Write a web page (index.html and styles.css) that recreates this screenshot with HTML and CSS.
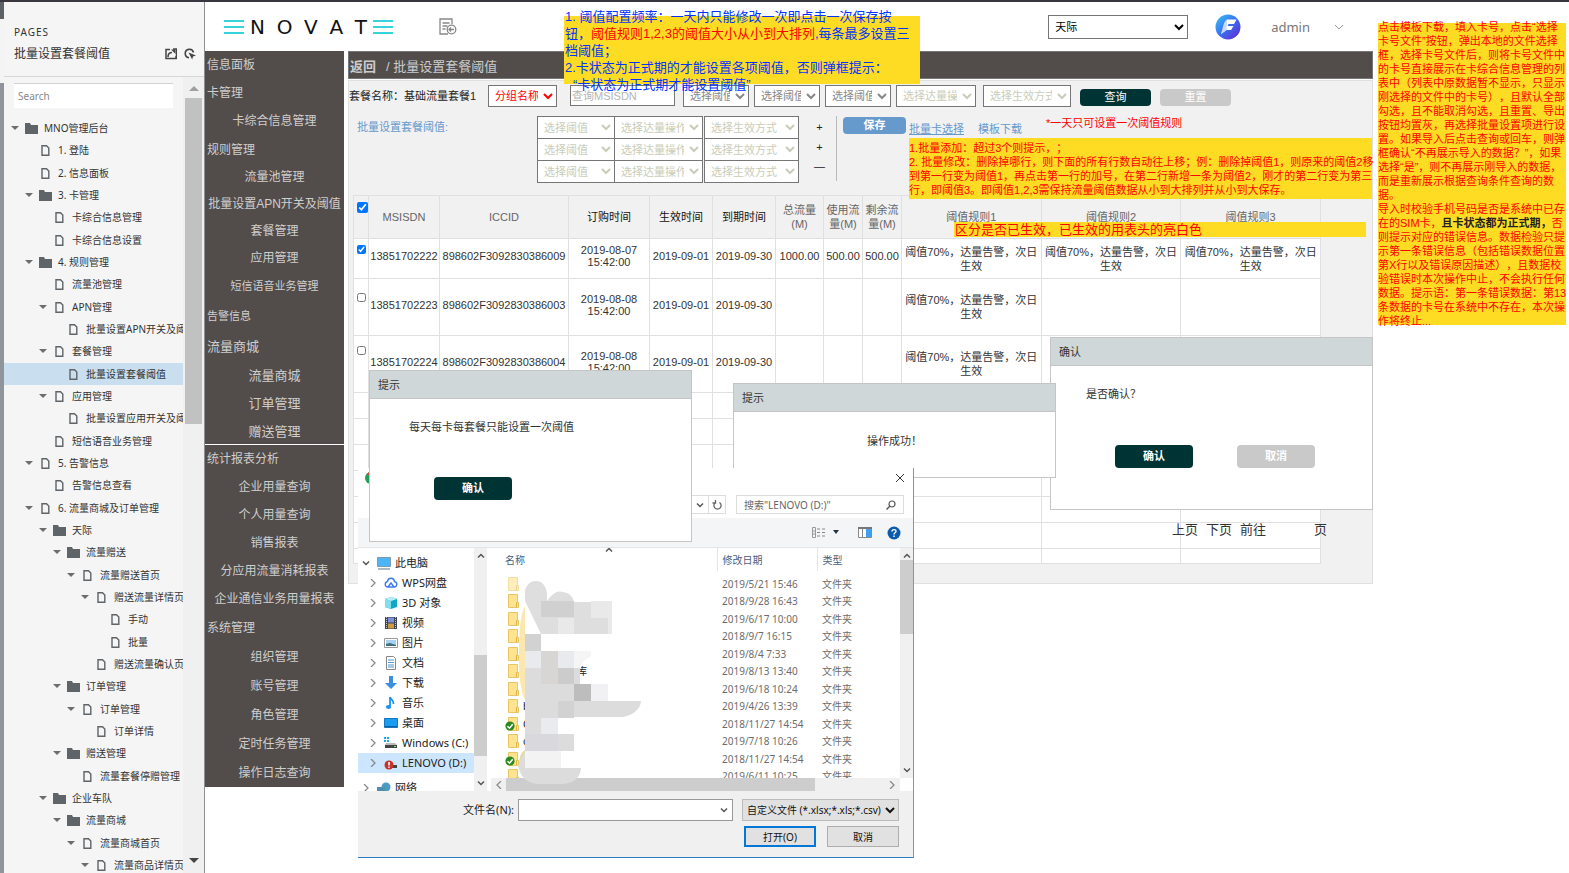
FILE: index.html
```html
<!DOCTYPE html>
<html lang="zh-CN">
<head>
<meta charset="utf-8">
<title>批量设置套餐阈值</title>
<link rel="stylesheet" href="styles.css">
</head>
<body>
<svg class="sprite" aria-hidden="true">
  <symbol id="folder" viewBox="0 0 13 11"><path d="M0 0h5l1 2h7v9H0z" fill="#5f6468"/></symbol>
  <symbol id="doc" viewBox="0 0 13 11"><path d="M3 .7h4.500l2.300 2.300v7.300H3z" fill="none" stroke="#5f6468" stroke-width="1.400"/></symbol>
  <symbol id="chev-r" viewBox="0 0 8 8"><path d="M2 0l4 4-4 4" fill="none" stroke="#8a8a8a" stroke-width="1.300"/></symbol>
  <symbol id="chev-d" viewBox="0 0 8 8"><path d="M1 2.500l3 3 3-3" fill="none" stroke="#555" stroke-width="1.500"/></symbol>
  <symbol id="chev-u" viewBox="0 0 8 8"><path d="M1 5.500l3-3 3 3" fill="none" stroke="#555" stroke-width="1.500"/></symbol>
  <symbol id="fold" viewBox="0 0 12 14"><path d="M1.500.5h9v8h1v5h-10z" fill="#ffe391" stroke="#e9c663"/><path d="M9.500 13V8.500h1" fill="none" stroke="#e0b545"/></symbol>
  <symbol id="ok" viewBox="0 0 10 10"><circle cx="5" cy="5" r="4.600" fill="#2d8a1f"/><path d="M2.500 5.200l2 2 3.200-4" fill="none" stroke="#fff" stroke-width="1.500"/></symbol>
</svg>

<div class="page">
  <div class="edge"><i class="edge-dark"></i><i class="edge-light"></i></div>

  <aside class="pages">
    <header class="pages-head">
      <div class="pages-label">PAGES</div>
      <div class="pages-title">
        <h1>批量设置套餐阈值</h1>
        <svg width="12" height="12" viewBox="0 0 12 12"><path d="M5 1.500H1v9h10V8M8 1h3.500v10" fill="none" stroke="#444" stroke-width="1.500"/><path d="M3 9c0-3 1.500-4.500 4-4.500" fill="none" stroke="#444" stroke-width="1.600"/><path d="M6 1.500h4.500V6z" fill="#444"/></svg>
        <svg width="12" height="12" viewBox="0 0 12 12"><path d="M9.500 4.500A4.200 4.200 0 1 0 5 9.700" fill="none" stroke="#444" stroke-width="1.600"/><path d="M4.500 4.500l7.500 3-3 1-.8 3z" fill="#444"/></svg>
      </div>
    </header>
    <div class="pages-body">
      <div class="tree-col">
        <input class="search" type="text" placeholder="Search" aria-label="Search">
        <ul class="tree">
          <li class="l0"><i class="caret"></i><svg><use href="#folder"/></svg><span>MNO管理后台</span></li>
          <li class="l1 leaf"><svg><use href="#doc"/></svg><span>1. 登陆</span></li>
          <li class="l1 leaf"><svg><use href="#doc"/></svg><span>2. 信息面板</span></li>
          <li class="l1"><i class="caret"></i><svg><use href="#folder"/></svg><span>3. 卡管理</span></li>
          <li class="l2 leaf"><svg><use href="#doc"/></svg><span>卡综合信息管理</span></li>
          <li class="l2 leaf"><svg><use href="#doc"/></svg><span>卡综合信息设置</span></li>
          <li class="l1"><i class="caret"></i><svg><use href="#folder"/></svg><span>4. 规则管理</span></li>
          <li class="l2 leaf"><svg><use href="#doc"/></svg><span>流量池管理</span></li>
          <li class="l2"><i class="caret"></i><svg><use href="#doc"/></svg><span>APN管理</span></li>
          <li class="l3 leaf"><svg><use href="#doc"/></svg><span>批量设置APN开关及阈值</span></li>
          <li class="l2"><i class="caret"></i><svg><use href="#doc"/></svg><span>套餐管理</span></li>
          <li class="l3 leaf current"><svg><use href="#doc"/></svg><span>批量设置套餐阈值</span></li>
          <li class="l2"><i class="caret"></i><svg><use href="#doc"/></svg><span>应用管理</span></li>
          <li class="l3 leaf"><svg><use href="#doc"/></svg><span>批量设置应用开关及阈值</span></li>
          <li class="l2 leaf"><svg><use href="#doc"/></svg><span>短信语音业务管理</span></li>
          <li class="l1"><i class="caret"></i><svg><use href="#doc"/></svg><span>5. 告警信息</span></li>
          <li class="l2 leaf"><svg><use href="#doc"/></svg><span>告警信息查看</span></li>
          <li class="l1"><i class="caret"></i><svg><use href="#doc"/></svg><span>6. 流量商城及订单管理</span></li>
          <li class="l2"><i class="caret"></i><svg><use href="#folder"/></svg><span>天际</span></li>
          <li class="l3"><i class="caret"></i><svg><use href="#folder"/></svg><span>流量赠送</span></li>
          <li class="l4"><i class="caret"></i><svg><use href="#doc"/></svg><span>流量赠送首页</span></li>
          <li class="l5"><i class="caret"></i><svg><use href="#doc"/></svg><span>赠送流量详情页</span></li>
          <li class="l6 leaf"><svg><use href="#doc"/></svg><span>手动</span></li>
          <li class="l6 leaf"><svg><use href="#doc"/></svg><span>批量</span></li>
          <li class="l5 leaf"><svg><use href="#doc"/></svg><span>赠送流量确认页</span></li>
          <li class="l3"><i class="caret"></i><svg><use href="#folder"/></svg><span>订单管理</span></li>
          <li class="l4"><i class="caret"></i><svg><use href="#doc"/></svg><span>订单管理</span></li>
          <li class="l5 leaf"><svg><use href="#doc"/></svg><span>订单详情</span></li>
          <li class="l3"><i class="caret"></i><svg><use href="#folder"/></svg><span>赠送管理</span></li>
          <li class="l4 leaf"><svg><use href="#doc"/></svg><span>流量套餐停赠管理</span></li>
          <li class="l2"><i class="caret"></i><svg><use href="#folder"/></svg><span>企业车队</span></li>
          <li class="l3"><i class="caret"></i><svg><use href="#folder"/></svg><span>流量商城</span></li>
          <li class="l4"><i class="caret"></i><svg><use href="#doc"/></svg><span>流量商城首页</span></li>
          <li class="l5"><i class="caret"></i><svg><use href="#doc"/></svg><span>流量商品详情页</span></li>
        </ul>
      </div>
      <div class="tree-scroll"><i class="arrow-up"></i><i class="thumb"></i><i class="arrow-down"></i></div>
    </div>
  </aside>

  <div class="app">
    <header class="topbar">
      <div class="logo" role="img" aria-label="ENOVATE">
        <i class="bars"></i>
        <div class="logo-word"><span>N</span><span>O</span><span>V</span><span>A</span><span>T</span></div>
        <i class="bars"></i>
      </div>
      <svg class="report-icon" width="20" height="18" viewBox="0 0 20 18" fill="none" stroke="#888" stroke-width="1.300"><path d="M14 6V1H2v15h8M4.500 5h7M4.500 8h5M4.500 11h3"/><circle cx="13.500" cy="11.500" r="4.300"/><path d="M16 11.500h-5m2-2l-2 2 2 2"/></svg>
      <select class="tenant" aria-label="企业"><option>天际</option></select>
      <svg class="avatar" width="26" height="26" viewBox="0 0 26 26"><defs><linearGradient id="av" x1="0" y1="0" x2="1" y2="1"><stop offset="0" stop-color="#38c4f5"/><stop offset=".5" stop-color="#3a6ff0"/><stop offset="1" stop-color="#6a1fd0"/></linearGradient></defs><circle cx="13" cy="13" r="12.500" fill="url(#av)"/><path d="M12 5.500h9.500l-2.500 4.500h-5.500l-1 2h6l-2.500 4h-4.500l-5.500 4z" fill="#fff"/><path d="M12 5.500c-4 2.500-4 9-6 14.500l5.500-4z" fill="#c7d8fb"/></svg>
      <button class="user" type="button">admin<svg width="10" height="8" viewBox="0 0 10 8"><path d="M1 2l4 4 4-4" fill="none" stroke="#999"/></svg></button>
    </header>

    <div class="columns">
      <nav class="menu">
        <ul class="menu-group h28"><li>信息面板</li><li>卡管理</li><li class="sub">卡综合信息管理</li></ul>
        <ul class="menu-group h27"><li>规则管理</li><li class="sub">流量池管理</li><li class="sub">批量设置APN开关及阈值</li><li class="sub">套餐管理</li><li class="sub">应用管理</li><li class="sub small">短信语音业务管理</li></ul>
        <ul class="menu-group h30"><li class="small">告警信息</li><li class="large">流量商城</li></ul>
        <ul class="menu-group h28 ruled"><li class="sub large">流量商城</li><li class="sub large">订单管理</li><li class="sub large">赠送管理</li></ul>
        <ul class="menu-group h28"><li>统计报表分析</li><li class="sub">企业用量查询</li><li class="sub">个人用量查询</li><li class="sub">销售报表</li><li class="sub">分应用流量消耗报表</li><li class="sub">企业通信业务用量报表</li></ul>
        <ul class="menu-group h29"><li>系统管理</li><li class="sub">组织管理</li><li class="sub">账号管理</li><li class="sub">角色管理</li><li class="sub">定时任务管理</li><li class="sub">操作日志查询</li></ul>
      </nav>

      <main class="content">
        <div class="crumb"><b>返回</b><span>/ 批量设置套餐阈值</span></div>
        <section class="panel">
          <form class="filters">
            <span class="plan">套餐名称：基础流量套餐1</span>
            <select class="group-name" aria-label="分组名称"><option>分组名称</option></select>
            <input class="msisdn" type="text" placeholder="查询MSISDN" aria-label="查询MSISDN">
            <select class="w-short" aria-label="阈值1"><option>选择阈值</option></select>
            <select class="w-short" aria-label="阈值2"><option>选择阈值</option></select>
            <select class="w-short" aria-label="阈值3"><option>选择阈值</option></select>
            <select class="w-action pale" aria-label="达量操作"><option>选择达量操作</option></select>
            <select class="w-mode pale" aria-label="生效方式"><option>选择生效方式</option></select>
            <button class="btn dark query" type="button">查询</button>
            <button class="btn gray reset" type="button">重置</button>
          </form>

          <div class="batch">
            <span class="batch-label">批量设置套餐阈值:</span>
            <div class="rules">
              <select class="pale" aria-label="规则1阈值"><option>选择阈值</option></select><select class="pale" aria-label="规则1操作"><option>选择达量操作</option></select><select class="pale" aria-label="规则1方式"><option>选择生效方式</option></select>
              <select class="pale" aria-label="规则2阈值"><option>选择阈值</option></select><select class="pale" aria-label="规则2操作"><option>选择达量操作</option></select><select class="pale" aria-label="规则2方式"><option>选择生效方式</option></select>
              <select class="pale" aria-label="规则3阈值"><option>选择阈值</option></select><select class="pale" aria-label="规则3操作"><option>选择达量操作</option></select><select class="pale" aria-label="规则3方式"><option>选择生效方式</option></select>
            </div>
            <div class="steps"><button type="button">+</button><button type="button">+</button><button type="button">—</button></div>
            <button class="btn save" type="button">保存</button>
            <a class="link underlined" href="#">批量卡选择</a>
            <a class="link" href="#">模板下载</a>
            <span class="hint">*一天只可设置一次阈值规则</span>
          </div>

          <table class="cards">
            <colgroup><col class="c-check"><col class="c-msisdn"><col class="c-iccid"><col class="c-order"><col class="c-date"><col class="c-date"><col class="c-total"><col class="c-used"><col class="c-used"><col><col><col></colgroup>
            <thead>
              <tr><th><input class="check-all" type="checkbox" checked aria-label="全选"></th><th>MSISDN</th><th>ICCID</th><th class="black">订购时间</th><th class="black">生效时间</th><th class="black">到期时间</th><th>总流量<br>(M)</th><th>使用流<br>量(M)</th><th>剩余流<br>量(M)</th><th>阈值规则1</th><th>阈值规则2</th><th>阈值规则3</th></tr>
            </thead>
            <tbody>
              <tr class="r-first"><td><input type="checkbox" checked aria-label="13851702222"></td><td>13851702222</td><td>898602F3092830386009</td><td class="time">2019-08-07 15:42:00</td><td>2019-09-01</td><td>2019-09-30</td><td>1000.00</td><td>500.00</td><td>500.00</td><td>阈值70%，达量告警，次日生效</td><td>阈值70%，达量告警，次日生效</td><td>阈值70%，达量告警，次日生效</td></tr>
              <tr class="r-tall"><td><input type="checkbox" aria-label="13851702223"></td><td>13851702223</td><td>898602F3092830386003</td><td class="time">2019-08-08 15:42:00</td><td>2019-09-01</td><td>2019-09-30</td><td></td><td></td><td></td><td>阈值70%，达量告警，次日生效</td><td></td><td></td></tr>
              <tr class="r-tall r-high"><td><input type="checkbox" aria-label="13851702224"></td><td>13851702224</td><td>898602F3092830386004</td><td class="time">2019-08-08 15:42:00</td><td>2019-09-01</td><td>2019-09-30</td><td></td><td></td><td></td><td>阈值70%，达量告警，次日生效</td><td></td><td></td></tr>
              <tr class="r-empty"><td></td><td></td><td></td><td></td><td></td><td></td><td></td><td></td><td></td><td></td><td></td><td></td></tr>
              <tr class="r-empty"><td></td><td></td><td></td><td></td><td></td><td></td><td></td><td></td><td></td><td></td><td></td><td></td></tr>
              <tr class="r-empty"><td></td><td></td><td></td><td></td><td></td><td></td><td></td><td></td><td></td><td></td><td></td><td></td></tr>
              <tr class="r-empty"><td></td><td></td><td></td><td></td><td></td><td></td><td></td><td></td><td></td><td></td><td></td><td></td></tr>
              <tr class="r-empty"><td></td><td></td><td></td><td></td><td></td><td></td><td></td><td></td><td></td><td></td><td></td><td></td></tr>
              <tr class="r-empty"><td></td><td></td><td></td><td></td><td></td><td></td><td></td><td></td><td></td><td></td><td></td><td></td></tr>
              <tr class="r-last"><td></td><td></td><td></td><td></td><td></td><td></td><td></td><td></td><td></td><td></td><td></td><td></td></tr>
            </tbody>
          </table>
        </section>
      </main>
    </div>
  </div>

  <aside class="side">
    <div class="note side-note"><p>点击模板下载，填入卡号，点击“选择<br>卡号文件”按钮，弹出本地的文件选择<br>框，选择卡号文件后，则将卡号文件中<br>的卡号直接展示在卡综合信息管理的列<br>表中（列表中原数据暂不显示，只显示<br>刚选择的文件中的卡号），且默认全部<br>勾选，且不能取消勾选，且重置、导出<br>按钮均置灰，再选择批量设置项进行设<br>置。如果导入后点击查询或回车，则弹<br>框确认“不再展示导入的数据？”，如果<br>选择“是”，则不再展示刚导入的数据，<br>而是重新展示根据查询条件查询的数<br>据。<br>导入时校验手机号码是否是系统中已存<br>在的SIM卡，<b>且卡状态都为正式期，</b>否<br>则提示对应的错误信息。数据检验只提<br>示第一条错误信息（包括错误数据位置<br>第X行以及错误原因描述），且数据校<br>验错误时本次操作中止，不会执行任何<br>数据。提示语：第一条错误数据：第13<br>条数据的卡号在系统中不存在，本次操<br>作将终止...</p></div>
  </aside>

  <div class="note top-note"><p>1. 阈值配置频率：一天内只能修改一次即点击一次保存按<br>钮，<em>阈值规则1,2,3的阈值大小从小到大排列</em>,每条最多设置三<br>档阈值；<br>2.卡状态为正式期的才能设置各项阈值，否则弹框提示：<br><span class="quoted">“卡状态为正式期才能设置阈值”</span></p></div>
  <div class="note batch-note"><p>1.批量添加：超过3个则提示，；<br>2. 批量修改：删除掉哪行，则下面的所有行数自动往上移；例：删除掉阈值1，则原来的阈值2移<br>到第一行变为阈值1，再点击第一行的加号，在第二行新增一条为阈值2，刚才的第二行变为第三<br>行，即阈值3。即阈值1,2,3需保持流量阈值数据从小到大排列并从小到大保存。</p></div>
  <div class="note head-note"><p>区分是否已生效，已生效的用表头的亮白色</p></div>

  <div class="pager"><a>上页</a><a>下页</a><span>前往</span><span class="pager-unit">页</span></div>

  <section class="dialog confirm">
    <h2>确认</h2>
    <p>是否确认？</p>
    <div class="actions"><button class="btn dark" type="button">确认</button><button class="btn gray" type="button">取消</button></div>
  </section>
  <section class="dialog success">
    <h2>提示</h2>
    <p>操作成功！</p>
  </section>

  <section class="files">
    <div class="files-top">
      <svg class="chrome" width="12" height="12" viewBox="0 0 12 12"><circle cx="6" cy="6" r="6" fill="#1fa15b"/><path d="M2 1.500A6 6 0 0 1 12 6H6z" fill="#e04438"/></svg>
      <button class="close" type="button" aria-label="关闭"><svg width="10" height="10" viewBox="0 0 10 10"><path d="M1 1l8 8M9 1L1 9" stroke="#333" fill="none"/></svg></button>
      <div class="address">
        <span class="path"><svg width="8" height="8"><use href="#chev-d"/></svg></span>
        <span class="reload"><svg width="10" height="10" viewBox="0 0 10 10"><path d="M7.500 2.500a3.600 3.600 0 1 1-4 0M3.500 0v3h-3" fill="none" stroke="#666" stroke-width="1.300"/></svg></span>
        <label class="find"><input type="text" placeholder="搜索&quot;LENOVO (D:)&quot;" aria-label="搜索"><svg width="10" height="10" viewBox="0 0 10 10"><circle cx="6" cy="4" r="3" fill="none" stroke="#555" stroke-width="1.200"/><path d="M4 6L.5 9.500" stroke="#555" stroke-width="1.400"/></svg></label>
      </div>
    </div>
    <div class="files-tools">
      <svg width="14" height="11" viewBox="0 0 14 11"><path d="M.5.500h3v10h-3zM.5 4h3M.5 7h3" fill="none" stroke="#999"/><path d="M5 2h3M10 2h3M5 5.500h3M10 5.500h3M5 9h3M10 9h3" stroke="#888"/></svg>
      <svg class="drop" width="8" height="5" viewBox="0 0 8 5"><path d="M1 0h6L4 4z" fill="#234"/></svg>
      <svg width="14" height="11" viewBox="0 0 14 11"><path d="M.5.500h13v10H.5zM4.500 1v9" fill="#fff" stroke="#888"/><path d="M8 1h5v9H8z" fill="#3f9ff0"/><path d="M0 1h14" stroke="#777" stroke-width="2"/></svg>
      <svg class="help" width="14" height="14" viewBox="0 0 14 14"><circle cx="7" cy="7" r="6.500" fill="#0b5cad"/><path d="M5 5.500C5 3 9 3 9 5.300 9 6.800 7 6.800 7 8.400M7 9.600v1.500" fill="none" stroke="#fff" stroke-width="1.400"/></svg>
    </div>
    <div class="files-body">
      <ul class="places">
        <li class="root"><svg class="ch"><use href="#chev-d"/></svg><svg class="pic" viewBox="0 0 14 14"><path d="M.5 1.500h13v9H.5z" fill="#4cb5f5" stroke="#7d9bb0"/><path d="M1 13h12" stroke="#789" stroke-width="1.200"/></svg>此电脑</li>
        <li><svg class="ch"><use href="#chev-r"/></svg><svg class="pic" viewBox="0 0 14 14"><path d="M4 11H3.500a2.800 2.800 0 0 1 0-5.500C4 1.500 10 1 10.500 5.500a2.800 2.800 0 0 1 0 5.500zl3-4 3 4" fill="none" stroke="#3f7be8" stroke-width="1.400"/></svg>WPS网盘</li>
        <li><svg class="ch"><use href="#chev-r"/></svg><svg class="pic" viewBox="0 0 14 14"><path d="M7 1l6 2v8l-6 2-6-2V3z" fill="#12a5cc"/><path d="M1 3l6 2v8l-6-2z" fill="#7fe0ea"/><path d="M1 3l6-2 6 2-6 2z" fill="#b8eff2"/></svg>3D 对象</li>
        <li><svg class="ch"><use href="#chev-r"/></svg><svg class="pic" viewBox="0 0 14 14"><path d="M1 1h12v12H1z" fill="#3b4452"/><path d="M4 1.500h6v5H4z" fill="#7d90d8"/><path d="M4 7.500h6v5H4z" fill="#d09a45"/><path d="M2.500 1v12M11.500 1v12" stroke="#ccd" stroke-dasharray="1 1"/></svg>视频</li>
        <li><svg class="ch"><use href="#chev-r"/></svg><svg class="pic" viewBox="0 0 14 14"><path d="M.5 2.500h13v9H.5z" fill="#fff" stroke="#999"/><path d="M2 4h10v6H2z" fill="#a8d3f0"/><path d="M2 8l4-1 6 2v1H2z" fill="#3d6f7c"/></svg>图片</li>
        <li><svg class="ch"><use href="#chev-r"/></svg><svg class="pic" viewBox="0 0 14 14"><path d="M2.500.5h7l2 2v11h-9z" fill="#fff" stroke="#888"/><path d="M4 4h6M4 6.500h6M4 9h6M4 11h6" stroke="#4d96c8"/></svg>文档</li>
        <li><svg class="ch"><use href="#chev-r"/></svg><svg class="pic" viewBox="0 0 14 14"><path d="M5 0h4v7h4l-6 6-6-6h4z" fill="#3b8fe0"/></svg>下载</li>
        <li><svg class="ch"><use href="#chev-r"/></svg><svg class="pic" viewBox="0 0 14 14"><path d="M6 1v9.500M6 1c1 3 4 3 3.500 7" fill="none" stroke="#1a94ea" stroke-width="1.800"/><ellipse cx="4.500" cy="11" rx="2.600" ry="2" fill="#1a94ea"/></svg>音乐</li>
        <li><svg class="ch"><use href="#chev-r"/></svg><svg class="pic" viewBox="0 0 14 14"><path d="M.5 2.500h13v9H.5z" fill="#1a9cf5" stroke="#1577bd"/><path d="M1 10.500h12" stroke="#0b5fa0"/></svg>桌面</li>
        <li><svg class="ch"><use href="#chev-r"/></svg><svg class="pic" viewBox="0 0 14 14"><path d="M0 1h2v2H0zM3 1h2v2H3zM0 4h2v2H0zM3 4h2v2H3z" fill="#19a8e8"/><path d="M2 7h9l2 2H1z" fill="#bbb"/><path d="M1 9h12v3H1z" fill="#444"/><path d="M10 10.500h2" stroke="#5f5"/></svg>Windows (C:)</li>
        <li class="picked"><svg class="ch"><use href="#chev-r"/></svg><svg class="pic" viewBox="0 0 14 14"><path d="M6 9h7v3H6z" fill="#444"/><circle cx="5" cy="9" r="4.500" fill="#c8322c"/><path d="M5 6v3.500M5 10.500v1.300" stroke="#fff" stroke-width="1.600"/></svg>LENOVO (D:)</li>
        <li class="root net"><svg class="ch"><use href="#chev-r"/></svg><svg class="pic" viewBox="0 0 14 14"><circle cx="9" cy="6" r="4.500" fill="#4a9dc0"/><path d="M0 6h8v6H0z" fill="#4c8fb0"/></svg>网络</li>
      </ul>
      <div class="bar places-bar"><svg><use href="#chev-u"/></svg><i></i><svg><use href="#chev-d"/></svg></div>
      <div class="list">
        <div class="list-scroll">
          <table class="file-table">
            <colgroup><col class="f-name"><col class="f-date"><col></colgroup>
            <thead><tr><th>名称<svg class="sort"><use href="#chev-u"/></svg></th><th>修改日期</th><th>类型</th></tr></thead>
            <tbody>
              <tr><td><svg class="fold pale-fold"><use href="#fold"/></svg></td><td>2019/5/21 15:46</td><td>文件夹</td></tr>
              <tr><td><svg class="fold"><use href="#fold"/></svg></td><td>2018/9/28 16:43</td><td>文件夹</td></tr>
              <tr><td><svg class="fold"><use href="#fold"/></svg></td><td>2019/6/17 10:00</td><td>文件夹</td></tr>
              <tr><td><svg class="fold"><use href="#fold"/></svg></td><td>2018/9/7 16:15</td><td>文件夹</td></tr>
              <tr><td><svg class="fold"><use href="#fold"/></svg></td><td>2019/8/4 7:33</td><td>文件夹</td></tr>
              <tr><td><svg class="fold"><use href="#fold"/></svg><span class="tail">库</span></td><td>2019/8/13 13:40</td><td>文件夹</td></tr>
              <tr><td><svg class="fold"><use href="#fold"/></svg></td><td>2019/6/18 10:24</td><td>文件夹</td></tr>
              <tr><td><svg class="fold"><use href="#fold"/></svg>b</td><td>2019/4/26 13:39</td><td>文件夹</td></tr>
              <tr><td><svg class="fold"><use href="#fold"/></svg><svg class="synced"><use href="#ok"/></svg>C</td><td>2018/11/27 14:54</td><td>文件夹</td></tr>
              <tr><td><svg class="fold"><use href="#fold"/></svg>c</td><td>2019/7/18 10:26</td><td>文件夹</td></tr>
              <tr><td><svg class="fold"><use href="#fold"/></svg><svg class="synced"><use href="#ok"/></svg></td><td>2018/11/27 14:54</td><td>文件夹</td></tr>
              <tr><td><svg class="fold"><use href="#fold"/></svg></td><td>2019/6/11 10:25</td><td>文件夹</td></tr>
            </tbody>
          </table>
          <div class="bar list-bar"><svg><use href="#chev-u"/></svg><i></i><svg><use href="#chev-d"/></svg></div>
        </div>
        <div class="hbar"><svg class="left"><use href="#chev-r"/></svg><i></i><svg><use href="#chev-r"/></svg></div>
      </div>
      <svg class="mosaic" width="130" height="212" viewBox="515 575 130 212">
        <path d="M519 650q0-33 6-44v94q-7-14-6-50z" fill="#fbe7b0"/>
        <path d="M519 765q0-12 6-15v25z" fill="#dfe0a8"/>
        <path d="M525 601V590q3-9 11-9 9 0 11 12v8q8-12 16-9 9 1 11 10h22q16 0 16 14v18h-71z" fill="#dedede"/>
        <path d="M525 634h16v17h50v5q-11 4-11 14v14h28v17h33q-1 12-18 16h-65v17h16v17h-33v17h40q-1 14-17 16h-24q-18 0-22-18l7-14z" fill="#dcdcdc"/>
        <path d="M541 601h33v16h-33z" fill="#d0d0d0"/><path d="M558 618h16v16h-16zM591 601h21v33h-4v-16h-17z" fill="#e9e9e9"/>
        <path d="M525 634h16v17h-16z" fill="#d2d2d2"/><path d="M525 651h16v17h-16zM558 651h16v17h-16z" fill="#e9eaed"/><path d="M574 651h17v5q-9 3-10 12h-7z" fill="#f5f5f5"/>
        <path d="M541 651h17v33h-17z" fill="#d8d5d5"/><path d="M558 668h16v16h-16z" fill="#ccc"/>
        <path d="M574 684h17v17h-17z" fill="#bdbdbd"/><path d="M591 684h17v17h-17z" fill="#f1f1f3"/>
        <path d="M558 701h16v17h-16z" fill="#d2d2d2"/><path d="M541 718h17v16h-17z" fill="#eaebef"/>
        <path d="M525 734h33v17h-33z" fill="#d9d9dd"/><path d="M525 751h36v17h-36z" fill="#f3f3f3"/>
      </svg>
    </div>
    <div class="files-foot">
      <label for="fname">文件名(N):</label>
      <div class="combo"><input id="fname" type="text"><svg width="8" height="8"><use href="#chev-d"/></svg></div>
      <select aria-label="文件类型"><option>自定义文件 (*.xlsx;*.xls;*.csv)</option></select>
      <div class="foot-actions"><button class="open" type="button">打开(O)</button><button type="button">取消</button></div>
    </div>
  </section>

  <section class="dialog once">
    <h2>提示</h2>
    <p>每天每卡每套餐只能设置一次阈值</p>
    <div class="actions"><button class="btn dark" type="button">确认</button></div>
  </section>
</div>
</body>
</html>
```
FILE: styles.css
```css
* { box-sizing: border-box; }
html, body { height: 100%; }
body {
  margin: 0;
  overflow: hidden;
  background: #fff;
  color: #333;
  font: 11px/14px "Liberation Sans", "Noto Sans CJK SC", sans-serif;
  text-spacing-trim: space-all;
}
ul, p, h1, h2 { margin: 0; padding: 0; list-style: none; font-weight: normal; }
button, input, select { font: inherit; margin: 0; }
i { display: block; }
.sprite { position: absolute; width: 0; height: 0; }

.page {
  position: relative;
  display: grid;
  grid-template-columns: 4px 201px minmax(0, 1fr) 196px;
  height: 100vh;
  min-height: 100%;
  border-top: 2px solid #39363f;
  overflow: hidden;
}
.edge { background: #8f959a; }
.edge-dark { height: 17px; background: #5b6165; }
.edge-light { height: 64px; background: #f4f4f4; }

/* page tree */
.pages {
  display: flex;
  flex-direction: column;
  min-height: 0;
  background: #f5f5f5;
  border-right: 1px solid #8f9094;
  font-family: "Noto Sans", "Noto Sans CJK SC", sans-serif;
}
.pages-head { padding: 23px 8px 12px 10px; border-bottom: 1px solid #d5d7d9; }
.pages-label { font-size: 10px; letter-spacing: 1px; line-height: 14px; }
.pages-title { display: flex; align-items: center; gap: 7px; margin-top: 5px; height: 20px; }
.pages-title h1 { flex: 1; font-size: 12px; line-height: 20px; white-space: nowrap; }
.pages-body { display: flex; flex: 1; min-height: 0; }
.tree-col { flex: 1; min-width: 0; overflow: hidden; padding-top: 6px; }
.search {
  display: block;
  width: 159px;
  height: 25px;
  margin: 0 0 9px 10px;
  padding: 0 4px;
  border: 0;
  border-top: 1px solid #d2d2d2;
  background: #fff;
  font-size: 10px;
}
.search::placeholder { color: #888; }
.tree li {
  display: flex;
  align-items: center;
  height: 22px;
  white-space: nowrap;
  font-size: 10px;
}
.tree li:nth-child(3n) { margin-top: 1px; }
.tree svg { flex: none; width: 13px; height: 11px; margin: 0 6px; }
.caret { flex: none; width: 8px; border: 4px solid transparent; border-top-color: #6d6d6d; border-bottom: 0; }
.tree .l0 { padding-left: 7px; }
.tree .l1 { padding-left: 21px; }
.tree .l2 { padding-left: 35px; }
.tree .l3 { padding-left: 49px; }
.tree .l4 { padding-left: 63px; }
.tree .l5 { padding-left: 77px; }
.tree .l6 { padding-left: 91px; }
.tree .leaf::before { content: ""; flex: none; width: 8px; }
.tree .current { background: #c9dfef; }
.tree-scroll {
  display: flex;
  flex-direction: column;
  align-items: center;
  width: 21px;
  padding: 9px 1px 10px;
  background: #f0f0f0;
}
.arrow-up { border: 5px solid transparent; border-bottom-color: #a0a0a0; border-top: 0; }
.thumb { width: 17px; height: 326px; margin-top: 7px; background: #c1c1c1; }
.arrow-down { margin-top: auto; border: 5px solid transparent; border-top-color: #444; border-bottom: 0; }

/* application */
.app { min-width: 0; }
.topbar { display: flex; align-items: center; height: 49px; padding-right: 29px; }
.logo { display: flex; align-items: center; gap: 6px; margin-left: 19px; }
.bars { width: 20px; height: 14px; border: solid #35d3dc; border-width: 2px 0; }
.bars::after { content: ""; display: block; height: 2px; margin-top: 4px; background: #35d3dc; }
.logo-word {
  display: flex;
  justify-content: space-between;
  width: 117px;
  color: #111;
  font: 20px/22px "DejaVu Sans", sans-serif;
}
.report-icon { margin-left: 45px; }
select {
  height: 22px;
  padding: 0 2px;
  border: 1px solid #767676;
  border-radius: 0;
  background: #fff;
  color: #888;
}
.tenant { width: 140px; height: 24px; margin-left: auto; color: #000; }
.avatar { margin-left: 27px; }
.user {
  display: flex;
  align-items: center;
  gap: 24px;
  margin-left: 30px;
  padding: 0;
  border: 0;
  background: none;
  color: #777;
  font: 13px/18px "Noto Sans", sans-serif;
}
.columns { display: flex; align-items: flex-start; gap: 4px; }

.menu { flex: none; width: 139px; background: #524d4b; color: #d0cecd; font-size: 12px; }
.menu-group li { padding-left: 2px; white-space: nowrap; }
.menu-group .sub { padding: 0; text-align: center; }
.h27 { padding-top: 1px; }
.h27 li { height: 27px; line-height: 28px; }
.h28 li { height: 28px; line-height: 29px; }
.h29 li { height: 29px; line-height: 30px; }
.h30 li, .h27 .small { height: 30px; line-height: 31px; }
.ruled { border-bottom: 1px solid #fff; height: 84px; }
.menu .small { font-size: 11px; }
.menu .large { font-size: 13px; }

.content { flex: 1; min-width: 0; }
.crumb {
  display: flex;
  gap: 10px;
  height: 28px;
  padding-left: 1px;
  border: 1px solid #777;
  background: #524d4b;
  color: #ccc;
  font-size: 13px;
  line-height: 29px;
}
.panel { margin-top: 1px; padding: 4px 0 19px; border: 1px solid #e0e0e0; background: #f1f1f1; }
.filters { display: flex; }
.filters select, .filters input { flex: none; }
.plan { flex: none; width: 139px; line-height: 22px; color: #222; white-space: nowrap; }
.filters .group-name { width: 69px; color: #f00; }
.msisdn { width: 105px; height: 21px; margin: 0 8px 0 13px; padding: 0 1px; border: 1px solid #767676; background: #fff; }
.msisdn::placeholder { color: #b5b5b5; }
.w-short { width: 66px; margin-right: 5px; }
.w-action { width: 80px; margin-right: 7px; }
.w-mode { width: 88px; }
select.pale { color: #c9cdb8; }
.btn {
  flex: none;
  padding: 0;
  border: 0;
  border-radius: 4px;
  color: #fff;
  font-weight: bold;
  line-height: 17px;
}
.dark { background: #033; }
.gray { background: #c9c9c9; }
.query, .reset { width: 71px; height: 17px; margin: 4px 0 0 9px; font-weight: normal; }

.batch { display: flex; align-items: flex-start; height: 79px; margin-top: 9px; color: #69c; }
.batch-label { flex: none; width: 188px; padding: 4px 0 0 8px; }
.rules { flex: none; display: grid; grid-template-columns: 77px 89px 96px; }
.rules select { height: 23px; margin-bottom: -1px; }
.rules select:nth-child(3n + 1) { margin-right: -1px; }
.rules select:nth-child(3n) { margin-left: 1px; }
.steps { flex: none; display: grid; width: 38px; height: 65px; padding-left: 4px; border-right: 1px solid #bbb; grid-template-rows: 22px 18px 20px; }
.steps button { padding: 0; border: 0; background: none; color: #222; }
.save { width: 63px; height: 17px; margin: 1px 3px 0 6px; background: #69c; }
.link { margin: 6px 14px 0 0; color: #69c; text-decoration: none; white-space: nowrap; }
.underlined { text-decoration: underline; }
.hint { margin-left: 10px; color: #f00; white-space: nowrap; }

.cards { width: calc(100% - 55px); margin-left: 4px; table-layout: fixed; border-collapse: collapse; }
.cards th, .cards td { padding: 0 3px; border: 1px solid #e0e0e0; text-align: center; font-weight: normal; }
.cards td { background: #fff; }
.cards td:not(:nth-child(n + 10)) { padding: 0 0 5px; }
.cards th { height: 43px; padding: 0; color: #666; }
.cards .black { color: #111; }
.cards td.time:nth-child(4) { line-height: 12px; padding: 0 6px 5px; }
.c-check { width: 15px; }
.c-msisdn { width: 71px; }
.c-iccid { width: 129px; }
.c-order { width: 81px; }
.c-date { width: 63px; }
.c-total { width: 48px; }
.c-used { width: 39px; }
.cards tr th:first-child, .cards tr td:first-child:first-child { padding: 6px 0 0 3px; vertical-align: top; line-height: 1px; text-align: left; }
.cards input { width: 9px; height: 9px; }
.cards .check-all { width: 11px; height: 11px; }
.r-first td { height: 40px; }
.r-tall td { height: 57px; }
.cards tr.r-tall td:first-child:first-child { padding-top: 14px; }
.cards tr.r-high td:first-child:first-child { padding-top: 10px; }
.r-empty td { height: 26px; }
.r-last td { height: 15px; }
.cards tr.r-empty td:nth-child(n), .cards tr.r-last td:nth-child(n) { padding: 0; }

/* annotations */
.note { display: flex; align-items: center; background: #ffdc24; color: #f00; white-space: nowrap; }
.side { padding: 21px 0 0 5px; }
.side-note { width: 188px; height: 302px; }
.side-note b { color: #222; }
.top-note { position: absolute; z-index: 3; left: 564px; top: 14px; width: 356px; height: 68px; padding-left: 1px; color: #03f; font-size: 13px; line-height: 17px; }
.top-note em { color: #f00; font-style: normal; }
.quoted { padding-left: 8px; }
.batch-note { position: absolute; left: 909px; top: 136px; width: 463px; height: 61px; }
.head-note { position: absolute; left: 954px; top: 220px; width: 412px; height: 15px; padding-left: 1px; font-size: 13px; line-height: 15px; }

.pager { position: absolute; left: 1172px; top: 519px; display: flex; gap: 8px; font-size: 13px; line-height: 18px; }
.pager-unit { margin-left: 40px; }

/* message boxes */
.dialog { position: absolute; width: 323px; border: 1px solid #c5c5c5; background: #fff; color: #333; }
.dialog h2 { height: 28px; padding-left: 8px; border-bottom: 1px solid #c5c5c5; background: #cfd7d9; font-size: 11px; line-height: 28px; }
.dialog .btn { width: 78px; height: 23px; line-height: 23px; }
.actions { display: flex; gap: 44px; }
.confirm { left: 1050px; top: 335px; height: 173px; }
.confirm p { padding: 21px 35px 0; }
.confirm .actions { padding: 44px 64px 0; }
.success { left: 733px; top: 381px; height: 95px; }
.success p { padding: 22px 0 0 133px; }
.once { left: 369px; top: 368px; height: 172px; }
.once p { padding: 21px 39px 0; }
.once .actions { padding: 43px 64px 0; }

/* file chooser */
.files {
  position: absolute;
  left: 358px;
  top: 466px;
  width: 556px;
  border-right: 1px solid #5aa0dc;
  border-bottom: 1px solid #2a7fc8;
  background: #fff;
  color: #222;
  font-family: "Noto Sans", "Noto Sans CJK SC", sans-serif;
  font-size: 10px;
}
.files svg { display: block; flex: none; }
.files-top { position: relative; height: 50px; }
.chrome { position: absolute; left: 7px; top: 4px; }
.close { display: block; margin-left: auto; padding: 5px 8px 0; border: 0; background: none; }
.address { display: flex; justify-content: flex-end; padding: 12px 9px 0; }
.path, .reload { display: flex; align-items: center; justify-content: center; width: 17px; height: 19px; border: 1px solid #ddd; border-left: 0; }
.find { display: flex; align-items: center; width: 168px; height: 19px; margin-left: 10px; padding: 0 7px; border: 1px solid #ddd; }
.find input { flex: 1; min-width: 0; padding: 0; border: 0; background: none; }
.find input::placeholder { color: #666; }
.files-tools { display: flex; align-items: center; justify-content: flex-end; height: 30px; padding-right: 12px; border-bottom: 1px solid #e5e5e5; background: #f4f5f7; }
.drop { margin: 0 18px 0 6px; }
.help { margin-left: 15px; }
.files-body { position: relative; display: flex; height: 243px; overflow: hidden; }
.places { width: 116px; padding-top: 5px; font-size: 11px; }
.places li { display: flex; align-items: center; height: 20px; padding-left: 11px; white-space: nowrap; }
.places .root { padding-left: 4px; }
.places .net { margin-top: 5px; }
.places .picked { background: #cce6ff; }
.ch { width: 8px; height: 8px; margin-right: 7px; }
.pic { width: 14px; height: 14px; margin-right: 4px; }
.bar { display: flex; flex-direction: column; align-items: center; width: 13px; padding: 4px 0; background: #f0f0f0; }
.bar svg { width: 8px; height: 8px; }
.bar i { width: 100%; background: #cdcdcd; }
.places-bar i { height: 101px; margin: 95px 0 auto; }
.list { flex: 1; min-width: 0; margin-left: 4px; }
.list-scroll { display: flex; height: 230px; overflow: hidden; }
.file-table { flex: 1; table-layout: fixed; border-collapse: collapse; align-self: flex-start; color: #6d6d6d; }
.file-table th { position: relative; height: 23px; padding: 0 5px; text-align: left; font-weight: normal; color: #4c607a; border-left: 1px solid #e5e5e5; }
.file-table th:first-child { padding-left: 14px; border-left: 0; }
.file-table td { position: relative; height: 17px; padding: 0 5px; line-height: 14px; white-space: nowrap; }
.file-table tbody tr:nth-child(even) td { height: 18px; }
.file-table tbody::before { content: ""; display: block; height: 4px; }
.f-name { width: 226px; }
.f-date { width: 100px; }
.file-table td:first-child { padding-left: 16px; color: #222; }
.fold { float: left; width: 12px; height: 14px; margin-right: 4px; }
.pale-fold { opacity: .6; }
.synced { position: absolute; left: 14px; top: 6px; width: 10px; height: 10px; }
.tail { margin-left: 54px; }
.sort { position: absolute; left: 114px; top: -2px; width: 8px; height: 8px; }
.list-bar i { height: 74px; margin-bottom: auto; }
.hbar { display: flex; align-items: center; height: 13px; padding: 0 4px; margin-right: 13px; background: #f0f0f0; }
.hbar svg { width: 8px; height: 8px; }
.hbar .left { transform: rotate(180deg); }
.hbar i { width: 309px; height: 13px; margin: 0 auto 0 3px; background: #cdcdcd; }
.mosaic { position: absolute; left: 157px; top: 27px; }
.files-foot {
  display: grid;
  grid-template-columns: 160px 224px 157px;
  align-items: center;
  row-gap: 5px;
  height: 66px;
  padding: 8px 0 10px;
  background: #f0f0f0;
}
.files-foot label { padding-right: 4px; text-align: right; font-size: 11px; }
.combo { display: flex; align-items: center; height: 22px; padding-right: 4px; margin-right: 9px; border: 1px solid #999; background: #fff; }
.combo input { flex: 1; min-width: 0; border: 0; background: none; }
.files-foot select { padding: 0; border-color: #bbb; background: #e1e1e1; color: #111; font-size: 10px; }
.foot-actions { grid-column: 2 / 4; display: flex; justify-content: flex-end; gap: 11px; }
.foot-actions button { width: 72px; height: 21px; padding: 0; border: 1px solid #adadad; background: #e1e1e1; color: #111; }
.foot-actions .open { border: 2px solid #0078d7; }
```
